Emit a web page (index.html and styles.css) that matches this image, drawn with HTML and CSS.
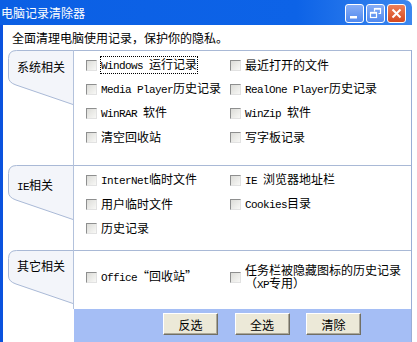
FILE: index.html
```html
<!DOCTYPE html>
<html lang="zh-CN">
<head>
    <meta charset="UTF-8">
    <title>电脑记录清除器</title>
    <link rel="stylesheet" href="styles.css">
</head>
<body>
    <div class="window">
        <!-- Title bar -->
        <div class="titlebar">
            <span class="title">电脑记录清除器</span>
            <div class="title-btns">
                <span class="tbtn">
                    <svg width="17" height="17" viewBox="0 0 17 17"><rect x="4" y="11" width="7" height="2.5" fill="#fff"/></svg>
                </span>
                <span class="tbtn">
                    <svg width="17" height="17" viewBox="0 0 17 17" fill="none" stroke="#fff">
                        <path d="M7.5 6.5V3.5h6v5h-2" stroke-width="1.2"/>
                        <path d="M7.5 3.8h6" stroke-width="1.8"/>
                        <rect x="3.5" y="7.5" width="6" height="5" stroke-width="1.2"/>
                        <path d="M3.5 7.8h6" stroke-width="1.8"/>
                    </svg>
                </span>
                <span class="tbtn tbtn-close">
                    <svg width="17" height="17" viewBox="0 0 17 17" stroke="#fff" stroke-width="2"><path d="M4.5 4.5l8 8M12.5 4.5l-8 8"/></svg>
                </span>
            </div>
        </div>

        <div class="client">
            <p class="intro">全面清理电脑使用记录，保护你的隐私。</p>

            <div class="groups">
                <!-- 系统相关 -->
                <section class="group group-sys">
                    <div class="tab">
                        <svg class="tab-shape" width="65" height="56" viewBox="0 0 65 56">
                            <path d="M0.5 27V8.5Q0.5 0.5 8.5 0.5H65V54.5L8 35Q0.5 32.5 0.5 27Z" fill="#f3f5fa"/>
                            <path d="M65 54.5L8 35Q0.5 32.5 0.5 27V8.5Q0.5 0.5 8.5 0.5H65" fill="none" stroke="#a9b9d6"/>
                        </svg>
                        <span class="tab-label">系统相关</span>
                    </div>
                    <div class="items">
                        <label class="item"><span class="box"></span><span class="item-text focused"><span class="en">Windows </span>运行记录</span></label>
                        <label class="item"><span class="box"></span><span class="item-text">最近打开的文件</span></label>
                        <label class="item"><span class="box"></span><span class="item-text"><span class="en">Media Player</span>历史记录</span></label>
                        <label class="item"><span class="box"></span><span class="item-text"><span class="en">RealOne Player</span>历史记录</span></label>
                        <label class="item"><span class="box"></span><span class="item-text"><span class="en">WinRAR </span>软件</span></label>
                        <label class="item"><span class="box"></span><span class="item-text"><span class="en">WinZip </span>软件</span></label>
                        <label class="item"><span class="box"></span><span class="item-text">清空回收站</span></label>
                        <label class="item"><span class="box"></span><span class="item-text">写字板记录</span></label>
                    </div>
                </section>

                <!-- IE相关 -->
                <section class="group group-ie">
                    <div class="tab">
                        <svg class="tab-shape" width="65" height="56" viewBox="0 0 65 56">
                            <path d="M0.5 27V8.5Q0.5 0.5 8.5 0.5H65V54.5L8 35Q0.5 32.5 0.5 27Z" fill="#f3f5fa"/>
                            <path d="M65 54.5L8 35Q0.5 32.5 0.5 27V8.5Q0.5 0.5 8.5 0.5H65" fill="none" stroke="#a9b9d6"/>
                        </svg>
                        <span class="tab-label"><span class="en">IE</span>相关</span>
                    </div>
                    <div class="items">
                        <label class="item"><span class="box"></span><span class="item-text"><span class="en">InterNet</span>临时文件</span></label>
                        <label class="item"><span class="box"></span><span class="item-text"><span class="en">IE </span>浏览器地址栏</span></label>
                        <label class="item"><span class="box"></span><span class="item-text">用户临时文件</span></label>
                        <label class="item"><span class="box"></span><span class="item-text"><span class="en">Cookies</span>目录</span></label>
                        <label class="item"><span class="box"></span><span class="item-text">历史记录</span></label>
                    </div>
                </section>

                <!-- 其它相关 -->
                <section class="group group-other">
                    <div class="tab">
                        <svg class="tab-shape" width="65" height="56" viewBox="0 0 65 56">
                            <path d="M0.5 27V8.5Q0.5 0.5 8.5 0.5H65V53.5L8 34Q0.5 31.5 0.5 26Z" fill="#f3f5fa"/>
                            <path d="M65 53.5L8 34Q0.5 31.5 0.5 26V8.5Q0.5 0.5 8.5 0.5H65" fill="none" stroke="#a9b9d6"/>
                        </svg>
                        <span class="tab-label">其它相关</span>
                    </div>
                    <div class="items">
                        <label class="item"><span class="box"></span><span class="item-text"><span class="en">Office</span>“回收站”</span></label>
                        <label class="item"><span class="box"></span><span class="item-text item-text-wrap">任务栏被隐藏图标的历史记录（<span class="en">XP</span>专用）</span></label>
                    </div>
                </section>

                <!-- Buttons -->
                <div class="actions">
                    <button class="btn">反选</button>
                    <button class="btn">全选</button>
                    <button class="btn">清除</button>
                </div>
            </div>
        </div>
    </div>
</body>
</html>
```

FILE: styles.css
```css
/* Reset */
* {
    box-sizing: border-box;
}

body {
    margin: 0;
    background: #fff;
    color: #000;
    font-family: "Noto Sans CJK SC", sans-serif;
    font-size: 12px;
    overflow: hidden;
}

.en {
    font-family: "Liberation Mono", "Noto Sans CJK SC", monospace;
    font-size: 11px;
    letter-spacing: -0.6px;
}

/* Window frame */
.window {
    width: 412px;
}

.titlebar {
    height: 25px;
    display: flex;
    align-items: center;
    background: linear-gradient(to right, #0b5fe4 0%, #0d63e7 72%, #3b87ef 100%);
    border-top-right-radius: 7px;
    color: #fff;
}

.title {
    padding-left: 1px;
    line-height: 14px;
}

.title-btns {
    margin-left: auto;
    display: flex;
    gap: 2px;
    padding: 2px 6px 0 0;
}

.tbtn {
    width: 19px;
    height: 19px;
    display: flex;
    align-items: center;
    justify-content: center;
    border: 1px solid #fff;
    border-radius: 3px;
    background: linear-gradient(#86adf6, #5189ee);
}

.tbtn-close {
    background: linear-gradient(#ee8058, #d4481f);
}

.client {
    border-left: 3px solid #0a52de;
    padding: 5px 0 0 5px;
}

.intro {
    margin: 0 0 4px;
    padding-left: 4px;
    line-height: 16px;
}

/* Groups */
.groups {
    border-right: 1px solid #9aaed6;
}

.group {
    display: grid;
    grid-template-columns: 66px 1fr;
}

.group-sys {
    height: 115px;
}

.group-ie {
    height: 85px;
}

.group-other {
    height: 59px;
}

.tab {
    position: relative;
    border-right: 1px solid #b3c2dc;
}

.tab-shape {
    position: absolute;
    left: 0;
    top: 0;
}

.tab-label {
    position: relative;
    display: block;
    padding: 10px 0 0 9px;
    line-height: 14px;
}

.group-ie .tab-label {
    padding-top: 13px;
}

.group-other .tab-label {
    padding-top: 9px;
}

.items {
    display: grid;
    grid-template-columns: 144px 1fr;
    grid-auto-rows: 24px;
    align-content: start;
    padding: 2px 0 0 12px;
    border-top: 1px solid #a9b9d6;
}

.group-other .items {
    padding-top: 14px;
}

.item {
    display: flex;
    align-items: center;
}

.box {
    flex: none;
    width: 11px;
    height: 11px;
    margin-right: 4px;
    border: 1px solid;
    border-color: #8e8f8f #e2e2e2 #e2e2e2 #8e8f8f;
    background: linear-gradient(135deg, #dcdcd8, #f8f8f6);
}

.item-text {
    line-height: 14px;
    white-space: nowrap;
}

.item-text-wrap {
    white-space: normal;
    line-height: 13px;
}

.focused {
    margin-left: -1px;
    line-height: 13px;
    border: 1px dotted #000;
}

/* Button bar */
.actions {
    margin-left: 66px;
    height: 33px;
    display: flex;
    align-items: flex-start;
    gap: 16.5px;
    padding: 4px 0 0 89px;
    background: #a5bef5;
}

.btn {
    width: 55px;
    height: 22px;
    padding: 0;
    font-family: "Noto Sans CJK SC", sans-serif;
    font-size: 12px;
    color: #000;
    background: #ece9d8;
    border: 1px solid;
    border-color: #fff #716f64 #716f64 #fff;
    box-shadow: inset -1px -1px 0 #aca899;
}
```
